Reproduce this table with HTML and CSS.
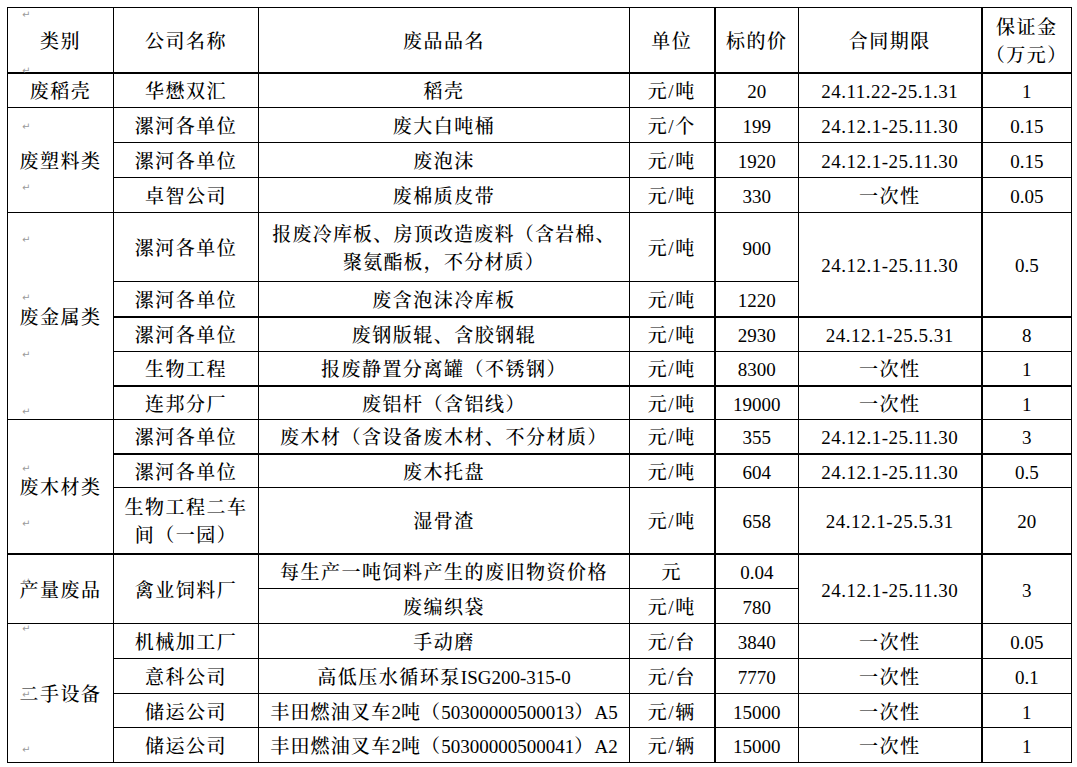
FILE: index.html
```html
<!DOCTYPE html>
<html lang="zh-CN">
<head>
<meta charset="utf-8">
<title>废品价格表</title>
<link rel="stylesheet" href="styles.css">
</head>
<body>
<div class="page">
<table class="grid">
  <colgroup>
    <col class="w-cat"><col class="w-co"><col class="w-item"><col class="w-unit"><col class="w-price"><col class="w-term"><col class="w-dep">
  </colgroup>
  <tr class="r-head thick-b">
    <td class="cat"><span class="pm pm-h1">↵</span>类别<span class="pm pm-h2">↵</span></td>
    <td>公司名称</td>
    <td>废品品名</td>
    <td>单位</td>
    <td class="c5">标的价</td>
    <td>合同期限</td>
    <td class="c7">保证金<br>（万元）</td>
  </tr>
  <tr>
    <td class="cat">废稻壳</td>
    <td>华懋双汇</td>
    <td>稻壳</td>
    <td>元/吨</td>
    <td class="c5 n">20</td>
    <td class="d">24.11.22-25.1.31</td>
    <td class="c7 n">1</td>
  </tr>
  <tr>
    <td class="cat" rowspan="3"><span class="pm pm-p1">↵</span>废塑料类<span class="pm pm-p2">↵</span></td>
    <td>漯河各单位</td>
    <td>废大白吨桶</td>
    <td>元/个</td>
    <td class="c5 n">199</td>
    <td class="d">24.12.1-25.11.30</td>
    <td class="c7 n">0.15</td>
  </tr>
  <tr>
    <td>漯河各单位</td>
    <td>废泡沫</td>
    <td>元/吨</td>
    <td class="c5 n">1920</td>
    <td class="d">24.12.1-25.11.30</td>
    <td class="c7 n">0.15</td>
  </tr>
  <tr>
    <td>卓智公司</td>
    <td>废棉质皮带</td>
    <td>元/吨</td>
    <td class="c5 n">330</td>
    <td>一次性</td>
    <td class="c7 n">0.05</td>
  </tr>
  <tr class="r69">
    <td class="cat" rowspan="5"><span class="pm pm-m1">↵</span><span class="pm pm-m2">↵</span>废金属类<span class="pm pm-m3">↵</span><span class="pm pm-m4">↵</span></td>
    <td>漯河各单位</td>
    <td class="nowrap">报废冷库板、房顶改造废料（含岩棉、<br>聚氨酯板，不分材质）</td>
    <td>元/吨</td>
    <td class="c5 n">900</td>
    <td class="d" rowspan="2">24.12.1-25.11.30</td>
    <td class="c7 n" rowspan="2">0.5</td>
  </tr>
  <tr>
    <td>漯河各单位</td>
    <td>废含泡沫冷库板</td>
    <td>元/吨</td>
    <td class="c5 n">1220</td>
  </tr>
  <tr class="thick-t">
    <td>漯河各单位</td>
    <td>废钢版辊、含胶钢辊</td>
    <td>元/吨</td>
    <td class="c5 n">2930</td>
    <td class="d">24.12.1-25.5.31</td>
    <td class="c7 n">8</td>
  </tr>
  <tr class="r34">
    <td>生物工程</td>
    <td>报废静置分离罐（不锈钢）</td>
    <td>元/吨</td>
    <td class="c5 n">8300</td>
    <td>一次性</td>
    <td class="c7 n">1</td>
  </tr>
  <tr class="r34 thick-t">
    <td>连邦分厂</td>
    <td>废铝杆（含铝线）</td>
    <td>元/吨</td>
    <td class="c5 n">19000</td>
    <td>一次性</td>
    <td class="c7 n">1</td>
  </tr>
  <tr class="r34">
    <td class="cat" rowspan="3"><span class="pm pm-w1">↵</span>废木材类<span class="pm pm-w2">↵</span></td>
    <td>漯河各单位</td>
    <td>废木材（含设备废木材、不分材质）</td>
    <td>元/吨</td>
    <td class="c5 n">355</td>
    <td class="d">24.12.1-25.11.30</td>
    <td class="c7 n">3</td>
  </tr>
  <tr class="r34 thick-t">
    <td>漯河各单位</td>
    <td>废木托盘</td>
    <td>元/吨</td>
    <td class="c5 n">604</td>
    <td class="d">24.12.1-25.11.30</td>
    <td class="c7 n">0.5</td>
  </tr>
  <tr class="r66">
    <td>生物工程二车<br>间（一园）</td>
    <td>湿骨渣</td>
    <td>元/吨</td>
    <td class="c5 n">658</td>
    <td class="d">24.12.1-25.5.31</td>
    <td class="c7 n">20</td>
  </tr>
  <tr class="thick-t">
    <td class="cat" rowspan="2"><span class="pm pm-q1">↵</span>产量废品</td>
    <td rowspan="2">禽业饲料厂</td>
    <td>每生产一吨饲料产生的废旧物资价格</td>
    <td>元</td>
    <td class="c5 n">0.04</td>
    <td class="d" rowspan="2">24.12.1-25.11.30</td>
    <td class="c7 n" rowspan="2">3</td>
  </tr>
  <tr>
    <td>废编织袋</td>
    <td>元/吨</td>
    <td class="c5 n">780</td>
  </tr>
  <tr>
    <td class="cat" rowspan="4"><span class="pm pm-s1">↵</span><span class="pm pm-s2">↵</span>二手设备<span class="pm pm-s3">↵</span></td>
    <td>机械加工厂</td>
    <td>手动磨</td>
    <td>元/台</td>
    <td class="c5 n">3840</td>
    <td>一次性</td>
    <td class="c7 n">0.05</td>
  </tr>
  <tr>
    <td>意科公司</td>
    <td>高低压水循环泵<span class="n">ISG200-315-0</span></td>
    <td>元/台</td>
    <td class="c5 n">7770</td>
    <td>一次性</td>
    <td class="c7 n">0.1</td>
  </tr>
  <tr class="r34">
    <td>储运公司</td>
    <td class="nowrap">丰田燃油叉车<span class="n">2</span>吨（<span class="n">50300000500013</span>）<span class="n">A5</span></td>
    <td>元/辆</td>
    <td class="c5 n">15000</td>
    <td>一次性</td>
    <td class="c7 n">1</td>
  </tr>
  <tr>
    <td>储运公司</td>
    <td class="nowrap">丰田燃油叉车<span class="n">2</span>吨（<span class="n">50300000500041</span>）<span class="n">A2</span></td>
    <td>元/辆</td>
    <td class="c5 n">15000</td>
    <td>一次性</td>
    <td class="c7 n">1</td>
  </tr>
</table>
</div>
</body>
</html>
```

FILE: styles.css
```css
html, body {
  margin: 0;
  padding: 0;
  background: #ffffff;
}

.page {
  padding: 7px 0 0 7px;
}

.grid {
  border-collapse: collapse;
  table-layout: fixed;
  width: 1065px;
  color: #000000;
  font-family: "Liberation Serif", "Noto Serif CJK SC", "Noto Sans CJK SC", serif;
  font-size: 19px;
  font-weight: 500;
  line-height: 28px;
}

.w-cat { width: 106px; }
.w-co { width: 145px; }
.w-item { width: 371px; }
.w-unit { width: 85px; }
.w-price { width: 84px; }
.w-term { width: 183px; }
.w-dep { width: 90px; }

.grid tr { height: 35px; }
.grid tr.r-head { height: 65px; }
.grid tr.r34 { height: 34px; }
.grid tr.r69 { height: 69px; }
.grid tr.r66 { height: 66px; }

.grid td {
  border: 1px solid #000000;
  padding: 4px 3px 0 3px;
  text-align: center;
  vertical-align: middle;
  letter-spacing: 1.5px;
  white-space: normal;
}

.grid td.nowrap { white-space: nowrap; letter-spacing: 1.2px; }

.grid tr.thick-b td { border-bottom-width: 2px; }
.grid tr.thick-t td { border-top-width: 2px; }
.grid td.c5 { border-left-width: 2px; }
.grid td.c7 { border-left-width: 2px; }

.grid td.n, .grid .n { letter-spacing: 0; }
.grid td.d { letter-spacing: 0.5px; }

.grid td.cat {
  position: relative;
  padding-left: 2px;
  padding-right: 2px;
}

.pm {
  position: absolute;
  left: 14px;
  font-family: "DejaVu Sans", sans-serif;
  font-size: 10px;
  font-weight: 400;
  line-height: 10px;
  letter-spacing: 0;
  color: #9a9a9a;
}

.pm-h1 { top: 2px; }
.pm-h2 { top: 58px; }
.pm-p1 { top: 14px; }
.pm-p2 { top: 75px; }
.pm-m1 { top: 22px; }
.pm-m2 { top: 80px; }
.pm-m3 { top: 137px; }
.pm-m4 { top: 194px; }
.pm-w1 { top: 44px; }
.pm-w2 { top: 99px; }
.pm-q1 { top: 22px; }
.pm-s1 { top: 0px; }
.pm-s2 { top: 66px; }
.pm-s3 { top: 121px; }
```
